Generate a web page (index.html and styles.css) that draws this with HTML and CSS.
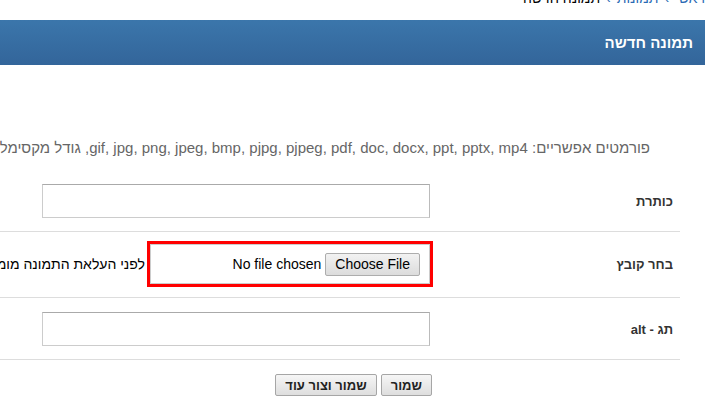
FILE: index.html
```html
<!DOCTYPE html>
<html lang="he" dir="rtl">
<head>
<meta charset="utf-8">
<title>תמונה חדשה</title>
<link rel="stylesheet" href="styles.css">
</head>
<body>
<div class="page">
  <div class="inner">
    <nav class="crumbs">
      <a href="#" class="crumb-link">ראשי</a><span class="sep">›</span><a href="#" class="crumb-link">תמונות</a><span class="sep">›</span><span class="crumb-current">תמונה חדשה</span>
    </nav>
    <div class="panel-head"><h1 class="panel-title">תמונה חדשה</h1></div>
    <p class="formats">פורמטים אפשריים: gif, jpg, png, jpeg, bmp, pjpg, pjpeg, pdf, doc, docx, ppt, pptx, mp4, גודל מקסימלי לקובץ: 10MB</p>
    <form class="form">
      <div class="row">
        <label class="lbl">כותרת</label>
        <div class="val"><input type="text" class="txt"></div>
      </div>
      <div class="row row-file">
        <label class="lbl">בחר קובץ</label>
        <div class="val">
          <div class="filebox">
            <div class="filebox-inner">
              <label class="file-btn">Choose File<input type="file" class="file-hidden"></label>
              <span class="file-status">No file chosen</span>
            </div>
          </div>
          <span class="help">לפני העלאת התמונה מומלץ להקטין אותה לגודל הרצוי</span>
        </div>
      </div>
      <div class="row">
        <label class="lbl">תג - alt</label>
        <div class="val"><input type="text" class="txt"></div>
      </div>
      <div class="actions">
        <button type="submit" class="btn">שמור</button>
        <button type="submit" class="btn">שמור וצור עוד</button>
      </div>
    </form>
  </div>
</div>
</body>
</html>
```
FILE: styles.css
```css
html, body {
  margin: 0;
  padding: 0;
  background: #fff;
}
body {
  font-family: "Liberation Sans", Arial, "DejaVu Sans", sans-serif;
  font-size: 13px;
  color: #000;
}
.page {
  direction: rtl;
  overflow: hidden;
  height: 418px;
  padding-right: 12px;
}
.inner {
  width: 1200px;
}
.crumbs {
  margin: -12px 0 12px;
  height: 20px;
  line-height: 20px;
  font-size: 14px;
  white-space: nowrap;
}
.crumb-link {
  color: #2a6ab4;
  text-decoration: none;
}
.sep {
  color: #2a6ab4;
  padding: 0 6px;
}
.crumb-current {
  color: #000;
}
.panel-head {
  height: 45px;
  display: flex;
  align-items: center;
  padding-right: 12px;
  background: linear-gradient(#3b76ab, #33659a);
}
.panel-title {
  margin: 0;
  font-size: 15px;
  font-weight: bold;
  color: #fff;
}
.formats {
  margin: 74px 55px 14px 0;
  line-height: 17px;
  font-size: 15px;
  color: #666;
  white-space: nowrap;
}
.form {
  margin-right: 25px;
}
.row {
  display: grid;
  grid-template-columns: 247px 1fr;
  align-items: center;
  border-bottom: 1px solid #ddd;
  padding: 14px 0 13px;
}
.row-file {
  padding: 9px 0 10px;
}
.lbl {
  padding-right: 7px;
  font-weight: bold;
  font-size: 13px;
  color: #333;
}
.val {
  display: flex;
  align-items: center;
}
.txt {
  box-sizing: border-box;
  width: 388px;
  height: 34px;
  margin: 0 3px 0 0;
  border: 1px solid #ccc;
  border-top-color: #aaa;
  border-right-color: #bbb;
  padding: 0 6px;
  font: inherit;
}
.filebox {
  box-sizing: border-box;
  width: 286px;
  border: 3px solid #f00;
}
.filebox-inner {
  box-sizing: border-box;
  height: 40px;
  display: flex;
  align-items: center;
  padding-right: 9px;
  border: 1px solid #ccc;
}
.file-btn {
  box-sizing: border-box;
  height: 23px;
  display: flex;
  align-items: center;
  padding: 0 9px;
  font-size: 14px;
  color: #000;
  border: 1px solid #adadad;
  border-radius: 2px;
  background: linear-gradient(#f2f2f2, #dcdcdc);
}
.file-hidden {
  display: none;
}
.file-status {
  margin-right: 4px;
  font-size: 14px;
  color: #000;
}
.help {
  margin-right: 2px;
  white-space: nowrap;
  font-size: 14px;
  color: #000;
}
.actions {
  display: flex;
  gap: 4px;
  padding: 14px 248px 0 0;
}
.btn {
  height: 22px;
  padding: 0 9px;
  font-family: inherit;
  font-size: 13px;
  font-weight: bold;
  color: #222;
  border: 1px solid #a6a6a6;
  border-radius: 2px;
  background: linear-gradient(#f6f6f6, #dedede);
}
```
